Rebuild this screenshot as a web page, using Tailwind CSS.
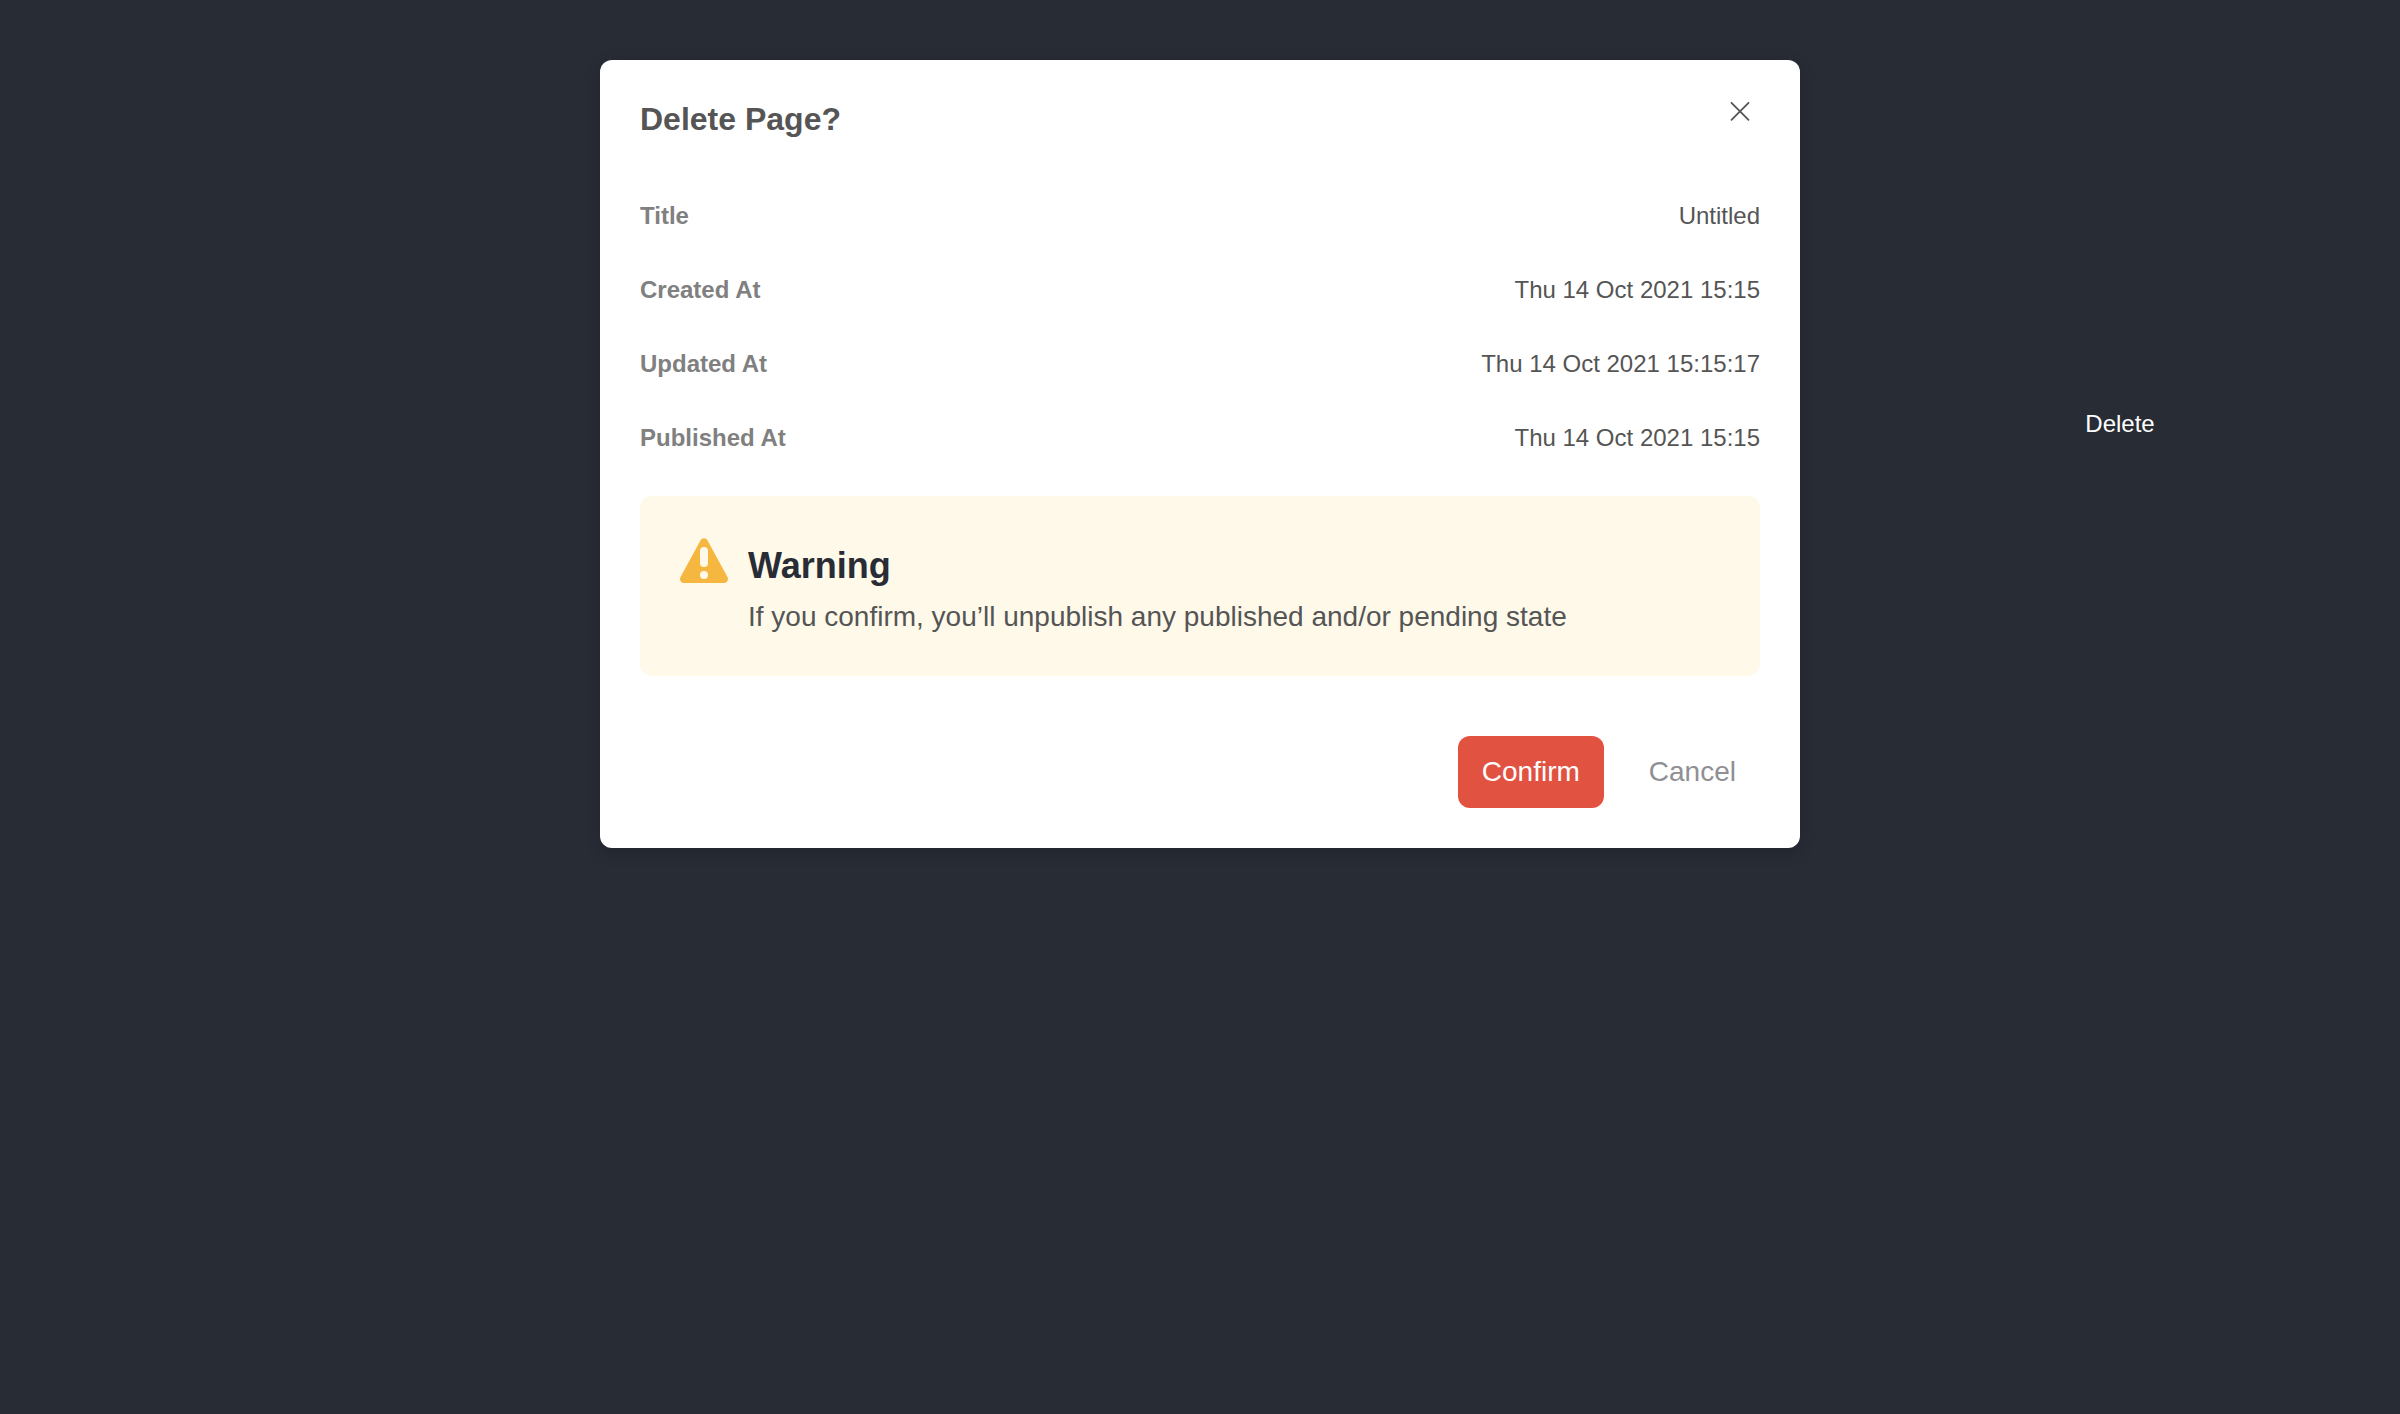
<!DOCTYPE html>
<html lang="en">
<head>
<meta charset="utf-8">
<meta name="viewport" content="width=device-width, initial-scale=1">
<title>Delete Page?</title>
<script src="https://cdn.jsdelivr.net/npm/@tailwindcss/browser@4"></script>
</head>
<body class="min-h-screen bg-[#282c35] font-['Liberation_Sans',Arial,sans-serif] text-2xl text-[#555555]">
<div class="grid grid-cols-[1fr_2fr_1fr] items-start pt-[60px]">
  <div role="dialog" aria-modal="true" aria-labelledby="dialog-title" class="col-start-2 rounded-xl bg-white p-10 shadow-[0_4px_16px_rgba(0,0,0,0.2)]">
    <header class="flex h-[79px] items-start justify-between">
      <h2 id="dialog-title" class="text-[32px] leading-[38px] font-bold">Delete Page?</h2>
      <button type="button" aria-label="Close" class="flex h-6 w-10 items-center justify-center">
        <svg class="size-5" viewBox="0 0 20 20" fill="none" stroke="#555555" stroke-width="1.8" stroke-linecap="round"><path d="M1.500 .800l17 17M18.500 .800l-17 17"/></svg>
      </button>
    </header>
    <dl class="leading-[34px]">
      <div class="flex justify-between py-5"><dt class="font-bold text-[#808080]">Title</dt><dd>Untitled</dd></div>
      <div class="flex justify-between py-5"><dt class="font-bold text-[#808080]">Created At</dt><dd>Thu 14 Oct 2021 15:15</dd></div>
      <div class="flex justify-between py-5"><dt class="font-bold text-[#808080]">Updated At</dt><dd>Thu 14 Oct 2021 15:15:17</dd></div>
      <div class="flex justify-between py-5"><dt class="font-bold text-[#808080]">Published At</dt><dd>Thu 14 Oct 2021 15:15</dd></div>
    </dl>
    <section class="mt-[21px] flex gap-5 rounded-xl bg-[#fff9e9] px-10 pt-10 pb-[38px]">
      <svg class="size-12 shrink-0" viewBox="0 0 48 48" aria-hidden="true">
        <path fill="#f6b740" d="M20.600 4.300C22 1.500 26 1.500 27.400 4.300L47.500 41C48.800 43.800 47.300 47 44 47H4C.7 47-.8 43.800.5 41Z"/>
        <rect x="20" y="11" width="8" height="20" rx="4" fill="#fff9e9"/>
        <circle cx="24" cy="39" r="4" fill="#fff9e9"/>
      </svg>
      <div>
        <h3 class="text-4xl leading-[60px] font-bold text-[#282c35]">Warning</h3>
        <p class="text-[28px] leading-[42px]">If you confirm, you’ll unpublish any published and/or pending state</p>
      </div>
    </section>
    <footer class="mt-[60px] flex justify-end gap-[21px] text-[28px] leading-10">
      <button type="button" class="rounded-xl bg-[#e25241] px-6 py-4 text-white">Confirm</button>
      <button type="button" class="rounded-xl px-6 py-4 text-[#8f8f94]">Cancel</button>
    </footer>
  </div>
  <div class="flex justify-center px-10 pt-[347px]">
    <button type="button" class="ml-10 leading-[34px] text-white">Delete</button>
  </div>
</div>
</body>
</html>
